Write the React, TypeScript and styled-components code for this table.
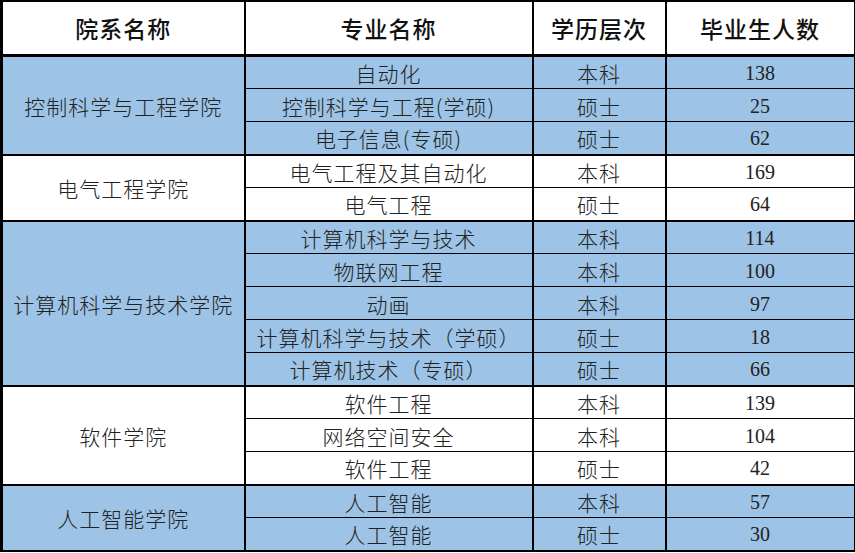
import React from "react";
import styled, { createGlobalStyle } from "styled-components";

const Global = createGlobalStyle`
  html, body { margin: 0; padding: 0; background: #ffffff; }
  body { font-family: "Noto Sans CJK SC", "Noto Sans", sans-serif; }
`;

const Table = styled.table`
  border-collapse: collapse;
  table-layout: fixed;
  width: 853px;
  margin: 0;
  border: 2px solid #000;
  border-left-width: 3px;
`;

const Col = styled.col<{ $w: number }>`
  width: ${(p) => p.$w}px;
`;

const HeadCell = styled.th`
  height: 52px;
  padding: 0;
  background: #ffffff;
  border-right: 2px solid #000;
  border-bottom: 3px solid #000;
  font-family: "Noto Sans CJK SC", sans-serif;
  font-weight: 500;
  font-size: 23px;
  letter-spacing: 1px;
  color: #111;
  text-align: center;
  vertical-align: middle;
`;

const Row = styled.tr<{ $blue: boolean }>`
  background: ${(p) => (p.$blue ? "#9dc3e6" : "#ffffff")};
  height: 33px;
`;

const Cell = styled.td<{ $num?: boolean; $groupEnd?: boolean }>`
  padding: 0;
  padding-top: 1px;
  border-right: 2px solid #000;
  border-bottom: ${(p) => (p.$groupEnd ? "2px" : "1.5px")} solid #000;
  font-family: ${(p) =>
    p.$num
      ? `"Liberation Serif", "Noto Sans CJK SC", serif`
      : `"Noto Sans CJK SC", sans-serif`};
  font-weight: 300;
  font-size: ${(p) => (p.$num ? "20px" : "21px")};
  letter-spacing: ${(p) => (p.$num ? "0" : "1px")};
  line-height: 24px;
  color: #222;
  text-align: center;
  vertical-align: middle;
  white-space: nowrap;
`;

const CollegeCell = styled(Cell)`
  border-bottom: 2px solid #000;
`;

type Major = { name: string; level: string; count: number };
type College = { name: string; blue: boolean; majors: Major[] };

const data: College[] = [
  {
    name: "控制科学与工程学院",
    blue: true,
    majors: [
      { name: "自动化", level: "本科", count: 138 },
      { name: "控制科学与工程(学硕)", level: "硕士", count: 25 },
      { name: "电子信息(专硕)", level: "硕士", count: 62 },
    ],
  },
  {
    name: "电气工程学院",
    blue: false,
    majors: [
      { name: "电气工程及其自动化", level: "本科", count: 169 },
      { name: "电气工程", level: "硕士", count: 64 },
    ],
  },
  {
    name: "计算机科学与技术学院",
    blue: true,
    majors: [
      { name: "计算机科学与技术", level: "本科", count: 114 },
      { name: "物联网工程", level: "本科", count: 100 },
      { name: "动画", level: "本科", count: 97 },
      { name: "计算机科学与技术（学硕）", level: "硕士", count: 18 },
      { name: "计算机技术（专硕）", level: "硕士", count: 66 },
    ],
  },
  {
    name: "软件学院",
    blue: false,
    majors: [
      { name: "软件工程", level: "本科", count: 139 },
      { name: "网络空间安全", level: "本科", count: 104 },
      { name: "软件工程", level: "硕士", count: 42 },
    ],
  },
  {
    name: "人工智能学院",
    blue: true,
    majors: [
      { name: "人工智能", level: "本科", count: 57 },
      { name: "人工智能", level: "硕士", count: 30 },
    ],
  },
];

export default function App() {
  return (
    <>
      <Global />
      <Table>
        <colgroup>
          <Col $w={243} />
          <Col $w={288} />
          <Col $w={133} />
          <Col $w={189} />
        </colgroup>
        <thead>
          <tr>
            <HeadCell>院系名称</HeadCell>
            <HeadCell>专业名称</HeadCell>
            <HeadCell>学历层次</HeadCell>
            <HeadCell>毕业生人数</HeadCell>
          </tr>
        </thead>
        <tbody>
          {data.map((c) =>
            c.majors.map((m, i) => {
              const end = i === c.majors.length - 1;
              return (
                <Row key={c.name + i} $blue={c.blue}>
                  {i === 0 && (
                    <CollegeCell rowSpan={c.majors.length}>{c.name}</CollegeCell>
                  )}
                  <Cell $groupEnd={end}>{m.name}</Cell>
                  <Cell $groupEnd={end}>{m.level}</Cell>
                  <Cell $groupEnd={end} $num>
                    {m.count}
                  </Cell>
                </Row>
              );
            })
          )}
        </tbody>
      </Table>
    </>
  );
}
